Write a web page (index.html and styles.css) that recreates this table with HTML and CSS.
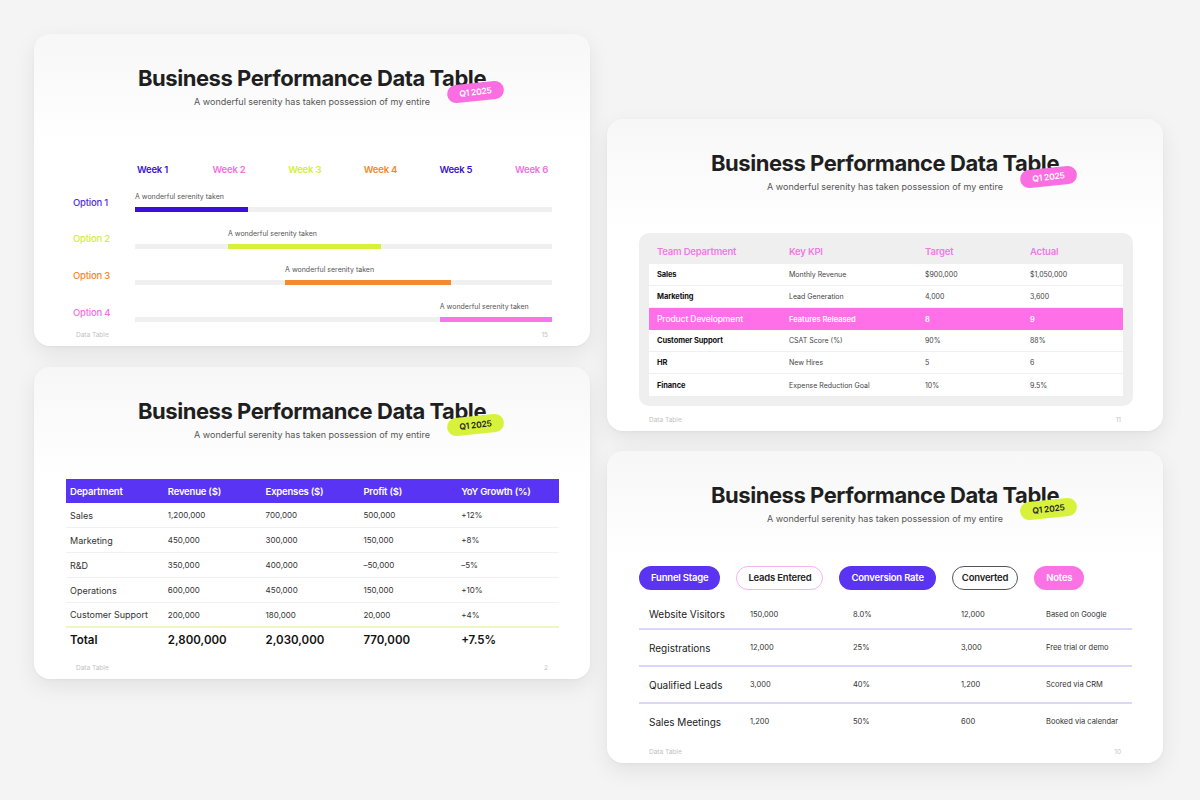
FILE: index.html
```html
<!DOCTYPE html>
<html lang="en">
<head>
<meta charset="utf-8">
<title>Business Performance Data Table</title>
<link rel="stylesheet" href="styles.css">
</head>
<body>
<div class="canvas">
  <div class="col col-left">
    <!-- Card 1: Gantt -->
    <section class="card">
      <header class="head">
        <h1 class="title">Business Performance Data Table</h1>
        <p class="sub">A wonderful serenity has taken possession of my entire</p>
      </header>
      <span class="badge badge-pink">Q1 2025</span>
      <div class="gantt">
        <div class="weeks">
          <span class="c-indigo">Week 1</span>
          <span class="c-pink">Week 2</span>
          <span class="c-lime">Week 3</span>
          <span class="c-orange">Week 4</span>
          <span class="c-indigo">Week 5</span>
          <span class="c-pink">Week 6</span>
        </div>
        <div class="g-row">
          <span class="g-label c-violet">Option 1</span>
          <div class="g-track-wrap">
            <span class="g-cap" style="margin-left:0%">A wonderful serenity taken</span>
            <div class="g-track"><div class="g-bar bg-indigo" style="margin-left:0%;width:27.1%"></div></div>
          </div>
        </div>
        <div class="g-row">
          <span class="g-label c-lime">Option 2</span>
          <div class="g-track-wrap">
            <span class="g-cap" style="margin-left:22.3%">A wonderful serenity taken</span>
            <div class="g-track"><div class="g-bar bg-lime" style="margin-left:22.3%;width:36.7%"></div></div>
          </div>
        </div>
        <div class="g-row">
          <span class="g-label c-orange">Option 3</span>
          <div class="g-track-wrap">
            <span class="g-cap" style="margin-left:36%">A wonderful serenity taken</span>
            <div class="g-track"><div class="g-bar bg-orange" style="margin-left:36%;width:39.8%"></div></div>
          </div>
        </div>
        <div class="g-row">
          <span class="g-label c-pink">Option 4</span>
          <div class="g-track-wrap">
            <span class="g-cap" style="margin-left:73.1%">A wonderful serenity taken</span>
            <div class="g-track"><div class="g-bar bg-pink" style="margin-left:73.1%;width:27.1%"></div></div>
          </div>
        </div>
      </div>
      <footer class="foot"><span>Data Table</span><span>15</span></footer>
    </section>

    <!-- Card 2: Financial table -->
    <section class="card">
      <header class="head">
        <h1 class="title">Business Performance Data Table</h1>
        <p class="sub">A wonderful serenity has taken possession of my entire</p>
      </header>
      <span class="badge badge-lime">Q1 2025</span>
      <div class="fin">
        <div class="fin-row fin-head">
          <span>Department</span><span>Revenue ($)</span><span>Expenses ($)</span><span>Profit ($)</span><span>YoY Growth (%)</span>
        </div>
        <div class="fin-row"><span class="dep">Sales</span><span>1,200,000</span><span>700,000</span><span>500,000</span><span>+12%</span></div>
        <div class="fin-row"><span class="dep">Marketing</span><span>450,000</span><span>300,000</span><span>150,000</span><span>+8%</span></div>
        <div class="fin-row"><span class="dep">R&amp;D</span><span>350,000</span><span>400,000</span><span>–50,000</span><span>–5%</span></div>
        <div class="fin-row"><span class="dep">Operations</span><span>600,000</span><span>450,000</span><span>150,000</span><span>+10%</span></div>
        <div class="fin-row fin-last"><span class="dep">Customer Support</span><span>200,000</span><span>180,000</span><span>20,000</span><span>+4%</span></div>
        <div class="fin-row fin-total"><span>Total</span><span>2,800,000</span><span>2,030,000</span><span>770,000</span><span>+7.5%</span></div>
      </div>
      <footer class="foot"><span>Data Table</span><span>2</span></footer>
    </section>
  </div>

  <div class="col col-right">
    <!-- Card 3: KPI table -->
    <section class="card">
      <header class="head">
        <h1 class="title">Business Performance Data Table</h1>
        <p class="sub">A wonderful serenity has taken possession of my entire</p>
      </header>
      <span class="badge badge-pink">Q1 2025</span>
      <div class="kpi">
        <div class="kpi-row kpi-head"><span>Team Department</span><span>Key KPI</span><span>Target</span><span>Actual</span></div>
        <div class="kpi-body">
          <div class="kpi-row"><span class="k-dep">Sales</span><span>Monthly Revenue</span><span>$900,000</span><span>$1,050,000</span></div>
          <div class="kpi-row"><span class="k-dep">Marketing</span><span>Lead Generation</span><span>4,000</span><span>3,600</span></div>
          <div class="kpi-row kpi-hl"><span class="k-dep">Product Development</span><span>Features Released</span><span>8</span><span>9</span></div>
          <div class="kpi-row"><span class="k-dep">Customer Support</span><span>CSAT Score (%)</span><span>90%</span><span>88%</span></div>
          <div class="kpi-row"><span class="k-dep">HR</span><span>New Hires</span><span>5</span><span>6</span></div>
          <div class="kpi-row"><span class="k-dep">Finance</span><span>Expense Reduction Goal</span><span>10%</span><span>9.5%</span></div>
        </div>
      </div>
      <footer class="foot"><span>Data Table</span><span>11</span></footer>
    </section>

    <!-- Card 4: Funnel -->
    <section class="card">
      <header class="head">
        <h1 class="title">Business Performance Data Table</h1>
        <p class="sub">A wonderful serenity has taken possession of my entire</p>
      </header>
      <span class="badge badge-lime">Q1 2025</span>
      <div class="funnel">
        <div class="pills">
          <span class="pill pill-purple">Funnel Stage</span>
          <span class="pill pill-out-pink">Leads Entered</span>
          <span class="pill pill-purple">Conversion Rate</span>
          <span class="pill pill-out-dark">Converted</span>
          <span class="pill pill-pink">Notes</span>
        </div>
        <div class="f-row f-first"><span class="f-stage">Website Visitors</span><span>150,000</span><span>8.0%</span><span>12,000</span><span>Based on Google</span></div>
        <div class="f-row"><span class="f-stage">Registrations</span><span>12,000</span><span>25%</span><span>3,000</span><span>Free trial or demo</span></div>
        <div class="f-row"><span class="f-stage">Qualified Leads</span><span>3,000</span><span>40%</span><span>1,200</span><span>Scored via CRM</span></div>
        <div class="f-row"><span class="f-stage">Sales Meetings</span><span>1,200</span><span>50%</span><span>600</span><span>Booked via calendar</span></div>
      </div>
      <footer class="foot"><span>Data Table</span><span>10</span></footer>
    </section>
  </div>
</div>
</body>
</html>
```

FILE: styles.css
```css
* { box-sizing: border-box; }
html, body { margin: 0; padding: 0; }
body {
  width: 1200px;
  height: 800px;
  overflow: hidden;
  background: #f4f4f4;
  font-family: Inter, "Noto Sans", "Liberation Sans", sans-serif;
  color: #222;
}
.canvas {
  display: flex;
  gap: 17px;
  padding-left: 34px;
}
.col { display: flex; flex-direction: column; }
.col-left { padding-top: 34px; gap: 21px; }
.col-right { padding-top: 119px; gap: 20px; }

.card {
  position: relative;
  width: 556px;
  height: 312px;
  border-radius: 16px;
  background: linear-gradient(#f7f7f7 0, #ffffff 110px);
  box-shadow: 0 8px 22px rgba(0, 0, 0, 0.075), 0 1px 3px rgba(0, 0, 0, 0.04);
  display: flex;
  flex-direction: column;
}

.head { padding-top: 31px; text-align: center; }
.title {
  margin: 0;
  font-size: 22px;
  line-height: 26px;
  font-weight: 700;
  letter-spacing: -0.45px;
  color: #1f1f1f;
}
.sub {
  margin: 4px 0 0;
  font-size: 9px;
  line-height: 14px;
  color: #555;
}

.badge {
  position: absolute;
  left: 413px;
  top: 49px;
  width: 57px;
  height: 18px;
  border-radius: 9px;
  font-size: 8.5px;
  font-weight: 600;
  line-height: 18px;
  text-align: center;
  transform: rotate(-6deg);
  letter-spacing: -0.2px;
}
.badge-pink { background: #fb6ee2; color: #fff; }
.badge-lime { background: #d8f23b; color: #222; }

.foot {
  margin-top: auto;
  display: flex;
  justify-content: space-between;
  padding: 0 42px 7px;
  font-size: 6.5px;
  line-height: 8px;
  color: #c2c2c2;
}

/* colours */
.c-indigo { color: #3a12d6; }
.c-violet { color: #5530e2; }
.c-pink { color: #f570e3; }
.c-lime { color: #d3ee3c; }
.c-orange { color: #f5882b; }
.bg-indigo { background: #3a0fd8; }
.bg-pink { background: #f775e6; }
.bg-lime { background: #d8f03c; }
.bg-orange { background: #f58a2b; }

/* Gantt */
.gantt { padding: 0 38px 0 39px; margin-top: 54px; }
.weeks {
  display: grid;
  grid-template-columns: repeat(6, 75.6px);
  margin-left: 64px;
  font-size: 9.5px;
  line-height: 14px;
  font-weight: 600;
  letter-spacing: -0.2px;
}
.g-row {
  display: grid;
  grid-template-columns: 62px 417px;
  align-items: center;
  margin-top: 15px;
}
.g-row + .g-row { margin-top: 16.7px; }
.g-label { font-size: 9.5px; font-weight: 500; letter-spacing: -0.2px; }
.g-track-wrap { display: flex; flex-direction: column; }
.g-cap { font-size: 7px; line-height: 10px; color: #555; white-space: nowrap; }
.g-track { margin-top: 5px; height: 5px; background: #f0f0f0; display: flex; }
.g-bar { height: 5px; }

/* Financial table */
.fin { margin: 37px 31px 0 32px; }
.fin-row {
  display: grid;
  grid-template-columns: repeat(5, 1fr);
  align-items: center;
  height: 25px;
  padding-left: 4px;
  border-bottom: 1px solid #f1f1f1;
  font-size: 8px;
  color: #333;
}
.fin-row .dep { font-size: 9px; color: #333; }
.fin-head {
  height: 24px;
  background: #5a34f4;
  color: #fff;
  font-size: 9.5px;
  font-weight: 600;
  border-bottom: 0;
  letter-spacing: -0.2px;
}
.fin-last { border-bottom: 2px solid #eef6c6; }
.fin-total {
  height: 23px;
  border-bottom: 0;
  font-size: 11.5px;
  font-weight: 600;
  color: #111;
}

/* KPI table */
.kpi {
  margin: 39px 30px 0 32px;
  background: #efefef;
  border-radius: 10px;
  padding: 0 10px 10px;
}
.kpi-row {
  display: grid;
  grid-template-columns: 132px 136px 105px 1fr;
  align-items: center;
  padding-left: 8px;
  height: 22px;
  font-size: 7px;
  color: #444;
  border-bottom: 1px solid #f0f0f0;
}
.kpi-row:last-child { border-bottom: 0; }
.kpi-head {
  height: 31px;
  padding-top: 5px;
  border-bottom: 0;
  font-size: 9.5px;
  font-weight: 600;
  color: #f27ae6;
  letter-spacing: -0.2px;
}
.kpi-body { background: #fff; }
.k-dep { font-size: 7.5px; font-weight: 700; color: #111; letter-spacing: -0.1px; }
.kpi-hl { background: #ff6fe7; color: #fff; border-bottom: 0; font-weight: 600; font-size: 7.5px; }
.kpi-hl .k-dep { color: #fff; font-weight: 500; font-size: 8.5px; }

/* Funnel */
.funnel { margin: 40px 31px 0 32px; }
.pills { display: flex; gap: 16px; }
.pill {
  height: 24px;
  line-height: 22px;
  padding: 0 11px;
  border-radius: 12px;
  border: 1px solid transparent;
  font-size: 9.5px;
  font-weight: 600;
  letter-spacing: -0.2px;
  color: #222;
}
.pill-purple { background: #5a34f2; color: #fff; }
.pill-pink { background: #fb72e5; color: #fff; }
.pill-out-pink { border-color: #f6b4ef; background: #fff; }
.pill-out-dark { border-color: #555; background: #fff; padding: 0 9px; }
.f-row {
  display: grid;
  grid-template-columns: 101px 103px 108px 85px 1fr;
  align-items: center;
  padding-left: 10px;
  height: 37px;
  border-top: 2px solid #dcd6fa;
  font-size: 7.5px;
  color: #333;
}
.f-first { height: 38px; border-top: 0; padding-top: 10px; }
.f-stage { font-size: 10px; color: #222; }
```
